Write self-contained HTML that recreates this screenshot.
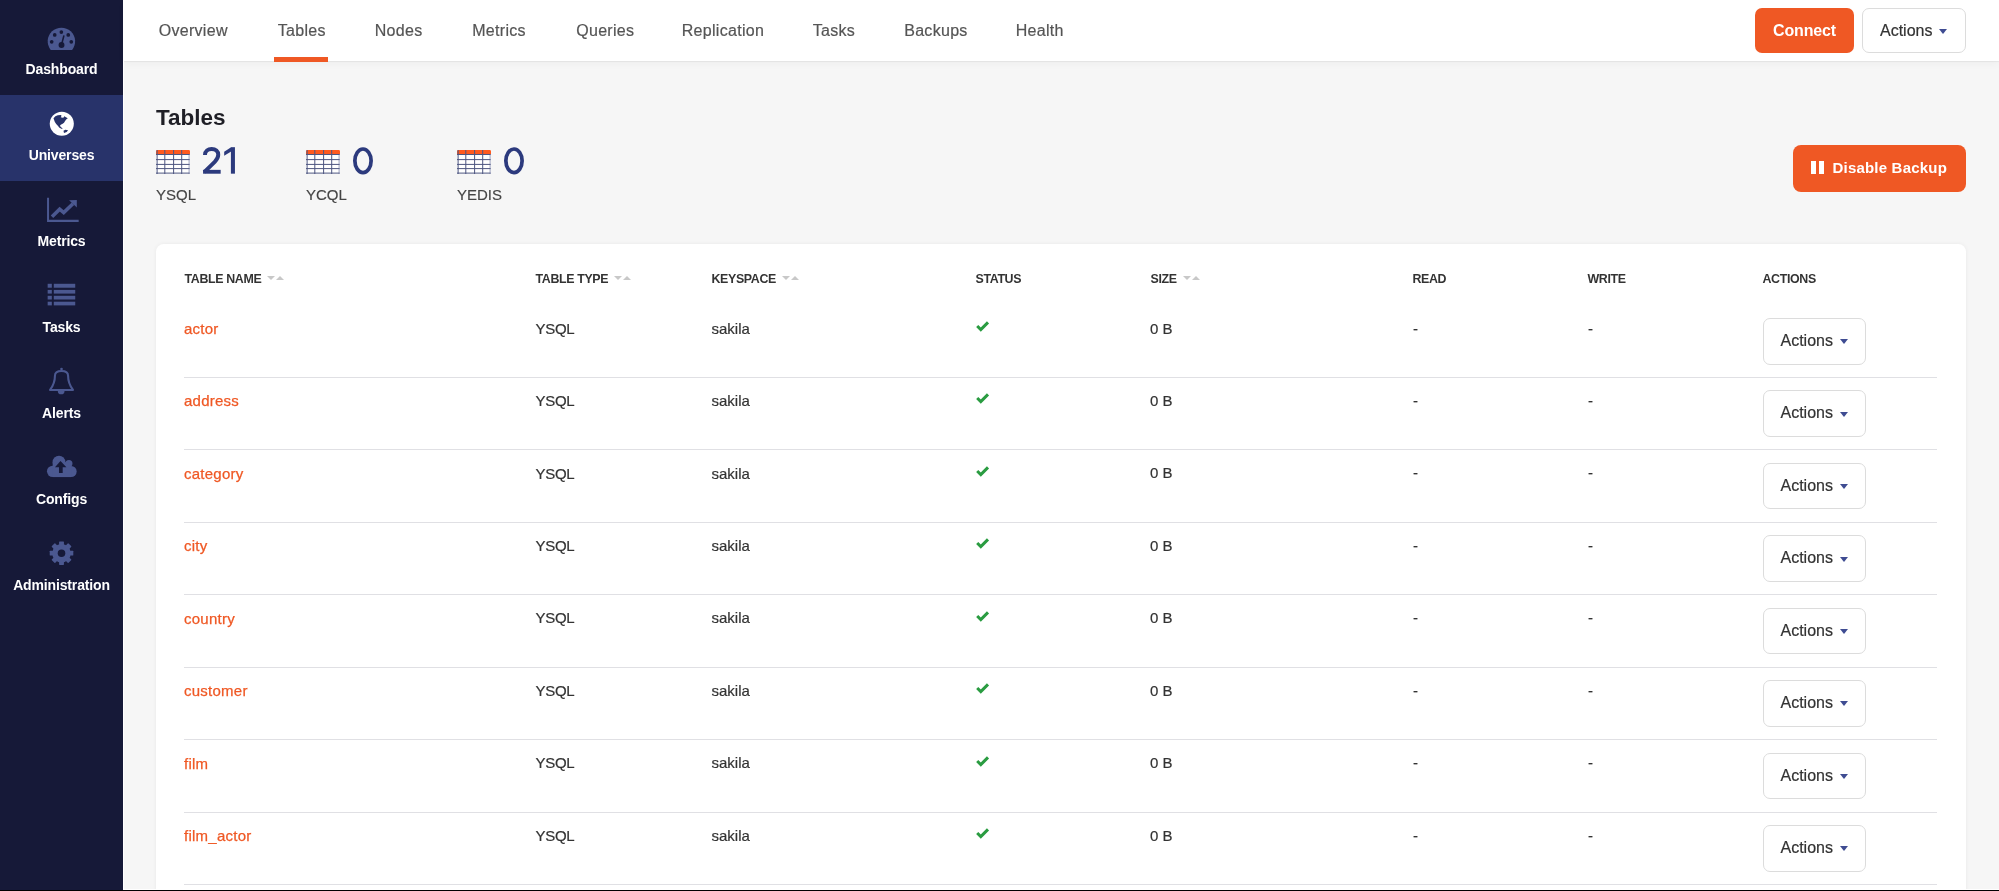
<!DOCTYPE html>
<html><head><meta charset="utf-8"><style>
*{box-sizing:border-box;margin:0;padding:0}
html,body{width:1999px;height:891px;overflow:hidden;background:#f6f6f6;font-family:"Liberation Sans",sans-serif;position:relative}
#side{position:absolute;left:0;top:0;width:123px;height:891px;background:#161938}
#vline{position:absolute;left:123px;top:0;width:1px;height:891px;background:#fff}
#bline{position:absolute;left:123px;top:889px;width:1876px;height:1px;background:#fff}
#black{position:absolute;left:0;top:890px;width:1999px;height:1px;background:#000}
.sn{position:absolute;left:0;width:123px;height:86px}
.snl{position:absolute;left:0;width:123px;top:51.5px;text-align:center;color:#fff;font-weight:bold;font-size:14px;line-height:16px;letter-spacing:-0.15px}
#top{position:absolute;left:124px;top:0;width:1875px;height:61px;background:#fff;box-shadow:0 1px 1px rgba(0,0,0,0.05),0 3px 8px rgba(0,0,0,0.035)}
.tab{position:absolute;top:22px;font-size:16px;line-height:18px;color:#555;white-space:nowrap;letter-spacing:0.3px;-webkit-text-stroke:0.2px #555}
#uline{position:absolute;left:150px;top:56.5px;width:54px;height:5px;background:#ef5824}
#connect{position:absolute;left:1631px;top:8px;width:99px;height:44.5px;border-radius:7px;background:#ef5824;color:#fff;font-weight:bold;font-size:16px;line-height:45.5px;letter-spacing:-0.15px;text-align:center}
.abtn{position:absolute;background:#fff;border:1px solid #dcdcdc;border-radius:7px;font-size:16px;color:#333;padding-left:17px;white-space:nowrap;-webkit-text-stroke:0.2px #333}
#tactions{left:1738px;top:8px;width:103.5px;height:44.5px;line-height:43px}
.caret{display:inline-block;width:0;height:0;border-left:4.5px solid transparent;border-right:4.5px solid transparent;border-top:5px solid #3f4c92;margin-left:7px;vertical-align:middle;position:relative;top:0px}
#h1{position:absolute;left:156px;top:104px;font-size:22.5px;font-weight:bold;color:#1f1f26;line-height:27px}
.num{position:absolute;top:142px;font-size:36px;color:#2c3a7d;line-height:40px;-webkit-text-stroke:0.7px #2c3a7d;letter-spacing:-1.5px}
.slabel{position:absolute;top:186px;font-size:15px;color:#444;line-height:17px;-webkit-text-stroke:0.15px #444}
#disable{position:absolute;left:1792.5px;top:145px;width:173px;height:46.5px;border-radius:8px;background:#ef5824;color:#fff;font-weight:bold;font-size:15px;line-height:46.5px;padding-left:40px;letter-spacing:0.2px}
.pause{position:absolute;left:18px;top:16px;width:5px;height:12.5px;background:#fff}
#disable .p2{left:26px}
#card{position:absolute;left:156px;top:244px;width:1810px;height:700px;background:#fff;border-radius:8px;box-shadow:0 0 4px rgba(0,0,0,0.06)}
.th{position:absolute;top:272px;font-size:12.4px;font-weight:bold;color:#333;line-height:14px;white-space:nowrap;letter-spacing:-0.35px}
.sort{display:inline-block;position:relative;width:18px;height:6px;margin-left:6px;top:-1px}
.sort i{position:absolute;top:0;width:0;height:0;border-left:4px solid transparent;border-right:4px solid transparent}
.sort .dn{left:0;border-left-width:4.3px;border-right-width:4.3px;border-top:4.7px solid #c8c8c8}
.sort .up{left:9px;border-left-width:4.3px;border-right-width:4.3px;border-bottom:4.7px solid #c8c8c8}
.td{position:absolute;font-size:15px;color:#333;line-height:20px;white-space:nowrap;-webkit-text-stroke:0.2px #333}
.link{color:#ef5824;letter-spacing:0.25px;-webkit-text-stroke:0.25px #ef5824}
.chk{position:absolute}
.rowbtn{left:1762.5px;width:103.5px;height:46.5px;line-height:43px;margin-top:0}
.sep{position:absolute;left:184px;width:1753px;height:1px;background:#e0e0e4}
</style></head>
<body>
<div id="wrap" style="position:absolute;left:0;top:0;width:1999px;height:891px;will-change:transform">
<div id="side"></div>
<div class="sn" style="top:9px;"><svg width="36" height="30" viewBox="0 0 1069 891" style="position:absolute;left:44px;top:15px;overflow:visible"><path d="M200 770 A407 407 0 1 1 834 770 Z" fill="#4b5890"/><g fill="#161938"><circle cx="515" cy="240" r="55"/><circle cx="318" cy="325" r="55"/><circle cx="720" cy="325" r="55"/><circle cx="228" cy="530" r="55"/><circle cx="810" cy="530" r="55"/><circle cx="520" cy="625" r="88"/></g><path d="M520 620 L588 355" stroke="#161938" stroke-width="46" stroke-linecap="round"/></svg><div class="snl">Dashboard</div></div>
<div class="sn" style="top:95px;background:#28336a;"><svg width="24" height="24" viewBox="0 0 891 891" style="position:absolute;left:50px;top:17px;overflow:visible"><circle cx="438" cy="434" r="447" fill="#fff"/><path d="M130 235 L200 160 L290 120 L400 110 L430 140 L400 195 L470 215 L520 195 L520 160 L560 175 L660 235 L600 280 L560 330 L520 400 L470 440 L400 470 L370 510 L400 560 L460 600 L470 620 L420 620 L340 580 L300 520 L230 450 L180 370 L150 290 Z M500 700 L570 660 L670 680 L620 740 L520 780 Z" fill="#28336a"/></svg><div class="snl">Universes</div></div>
<div class="sn" style="top:181px;"><svg width="36" height="30" viewBox="0 0 1069 891" style="position:absolute;left:44px;top:13px;overflow:visible"><path d="M90 110 H150 V765 H1030 V830 H90 Z" fill="#4b5890"/><path d="M237 677 L465 450 L585 550 L860 290" fill="none" stroke="#4b5890" stroke-width="106" stroke-linejoin="miter"/><path d="M745 185 L975 180 L975 400 Z" fill="#4b5890"/></svg><div class="snl">Metrics</div></div>
<div class="sn" style="top:267px;"><svg width="85" height="70" viewBox="0 0 1082 891" style="position:absolute;left:20px;top:5px;overflow:visible"><g fill="#4b5890"><rect x="352" y="150" width="53" height="50"/><rect x="430" y="150" width="273" height="50"/><rect x="352" y="228" width="53" height="47"/><rect x="430" y="228" width="273" height="47"/><rect x="352" y="303" width="53" height="47"/><rect x="430" y="303" width="273" height="47"/><rect x="352" y="378" width="53" height="47"/><rect x="430" y="378" width="273" height="47"/></g></svg><div class="snl">Tasks</div></div>
<div class="sn" style="top:353px;"><svg width="36" height="30" viewBox="0 0 1069 891" style="position:absolute;left:44px;top:11px;overflow:visible"><path d="M180 770 H860 M180 770 C270 650 325 540 325 350 C325 255 410 210 520 210 C630 210 715 255 715 350 C715 540 770 650 860 770" fill="none" stroke="#4b5890" stroke-width="62" stroke-linejoin="round" stroke-linecap="round"/><circle cx="520" cy="148" r="40" fill="#4b5890"/><path d="M410 800 A100 100 0 0 0 610 800 Z" fill="#4b5890"/></svg><div class="snl">Alerts</div></div>
<div class="sn" style="top:439px;"><svg width="36" height="30" viewBox="0 0 1069 891" style="position:absolute;left:44px;top:13px;overflow:visible"><g fill="#4b5890"><circle cx="258" cy="575" r="170"/><circle cx="445" cy="300" r="190"/><circle cx="740" cy="345" r="105"/><circle cx="805" cy="580" r="165"/><rect x="258" y="300" width="547" height="445"/></g><path d="M490 268 L665 450 H555 V625 H445 V450 H325 Z" fill="#161938"/></svg><div class="snl">Configs</div></div>
<div class="sn" style="top:525px;"><svg width="36" height="30" viewBox="0 0 1069 891" style="position:absolute;left:44px;top:11px;overflow:visible"><g fill="#4b5890" transform="translate(520 510)"><circle r="275"/><rect x="-72" y="-350" width="144" height="160" rx="18" transform="rotate(0)"/><rect x="-72" y="-350" width="144" height="160" rx="18" transform="rotate(45)"/><rect x="-72" y="-350" width="144" height="160" rx="18" transform="rotate(90)"/><rect x="-72" y="-350" width="144" height="160" rx="18" transform="rotate(135)"/><rect x="-72" y="-350" width="144" height="160" rx="18" transform="rotate(180)"/><rect x="-72" y="-350" width="144" height="160" rx="18" transform="rotate(225)"/><rect x="-72" y="-350" width="144" height="160" rx="18" transform="rotate(270)"/><rect x="-72" y="-350" width="144" height="160" rx="18" transform="rotate(315)"/></g><circle cx="520" cy="510" r="112" fill="#161938"/></svg><div class="snl">Administration</div></div>
<div id="top">
<div class="tab" style="left:34.7px">Overview</div>
<div class="tab" style="left:153.7px">Tables</div>
<div class="tab" style="left:250.7px">Nodes</div>
<div class="tab" style="left:348.2px">Metrics</div>
<div class="tab" style="left:452.2px">Queries</div>
<div class="tab" style="left:557.7px">Replication</div>
<div class="tab" style="left:688.7px">Tasks</div>
<div class="tab" style="left:780.2px">Backups</div>
<div class="tab" style="left:891.7px">Health</div>
<div id="uline"></div>
<div id="connect">Connect</div>
<div id="tactions" class="abtn">Actions<span class="caret"></span></div>
</div>
<div id="h1">Tables</div>
<svg width="34" height="24" viewBox="0 0 340 240" style="position:absolute;left:156px;top:150px"><rect x="0" y="0" width="340" height="240" fill="#fff"/><rect x="0" y="0" width="340" height="44" rx="12" fill="#ff5a1f"/><rect x="0" y="20" width="340" height="24" fill="#ff5a1f"/><rect x="6" y="0" width="10" height="240" fill="#4d5580"/><rect x="83" y="0" width="10" height="240" fill="#4d5580"/><rect x="171" y="0" width="10" height="240" fill="#4d5580"/><rect x="252" y="0" width="10" height="240" fill="#4d5580"/><rect x="326" y="40" width="10" height="200" fill="#9ca1bd"/><rect x="0" y="40" width="336" height="10" fill="#4d5580"/><rect x="0" y="91" width="336" height="10" fill="#4d5580"/><rect x="0" y="139" width="336" height="10" fill="#4d5580"/><rect x="0" y="181" width="336" height="10" fill="#4d5580"/><rect x="0" y="226" width="336" height="10" fill="#4d5580"/></svg>
<svg width="50" height="40" viewBox="0 0 1114 891" style="position:absolute;left:195px;top:140px"><g fill="none" stroke="#2c3a7d" stroke-width="88"><path d="M222 335 C222 240 290 200 370 200 C460 200 518 250 518 330 C518 400 485 440 440 485 L205 715"/></g><g fill="#2c3a7d"><rect x="180" y="665" width="392" height="86"/><rect x="800" y="160" width="90" height="590"/><path d="M650 262 L805 160 L805 258 L650 352 Z"/></g></svg>
<div class="slabel" style="left:156px">YSQL</div>
<svg width="34" height="24" viewBox="0 0 340 240" style="position:absolute;left:306px;top:150px"><rect x="0" y="0" width="340" height="240" fill="#fff"/><rect x="0" y="0" width="340" height="44" rx="12" fill="#ff5a1f"/><rect x="0" y="20" width="340" height="24" fill="#ff5a1f"/><rect x="6" y="0" width="10" height="240" fill="#4d5580"/><rect x="83" y="0" width="10" height="240" fill="#4d5580"/><rect x="171" y="0" width="10" height="240" fill="#4d5580"/><rect x="252" y="0" width="10" height="240" fill="#4d5580"/><rect x="326" y="40" width="10" height="200" fill="#9ca1bd"/><rect x="0" y="40" width="336" height="10" fill="#4d5580"/><rect x="0" y="91" width="336" height="10" fill="#4d5580"/><rect x="0" y="139" width="336" height="10" fill="#4d5580"/><rect x="0" y="181" width="336" height="10" fill="#4d5580"/><rect x="0" y="226" width="336" height="10" fill="#4d5580"/></svg>
<svg width="35" height="35" viewBox="0 0 891 891" style="position:absolute;left:345px;top:145px"><ellipse cx="458" cy="402" rx="207" ry="300" fill="none" stroke="#2c3a7d" stroke-width="95"/></svg>
<div class="slabel" style="left:306px">YCQL</div>
<svg width="34" height="24" viewBox="0 0 340 240" style="position:absolute;left:457px;top:150px"><rect x="0" y="0" width="340" height="240" fill="#fff"/><rect x="0" y="0" width="340" height="44" rx="12" fill="#ff5a1f"/><rect x="0" y="20" width="340" height="24" fill="#ff5a1f"/><rect x="6" y="0" width="10" height="240" fill="#4d5580"/><rect x="83" y="0" width="10" height="240" fill="#4d5580"/><rect x="171" y="0" width="10" height="240" fill="#4d5580"/><rect x="252" y="0" width="10" height="240" fill="#4d5580"/><rect x="326" y="40" width="10" height="200" fill="#9ca1bd"/><rect x="0" y="40" width="336" height="10" fill="#4d5580"/><rect x="0" y="91" width="336" height="10" fill="#4d5580"/><rect x="0" y="139" width="336" height="10" fill="#4d5580"/><rect x="0" y="181" width="336" height="10" fill="#4d5580"/><rect x="0" y="226" width="336" height="10" fill="#4d5580"/></svg>
<svg width="35" height="35" viewBox="0 0 891 891" style="position:absolute;left:495.5px;top:145px"><ellipse cx="458" cy="402" rx="207" ry="300" fill="none" stroke="#2c3a7d" stroke-width="95"/></svg>
<div class="slabel" style="left:457px">YEDIS</div>
<div id="disable"><span class="pause"></span><span class="pause p2"></span>Disable Backup</div>
<div id="card"></div>
<div class="th" style="left:184.5px">TABLE NAME<span class="sort"><i class="dn"></i><i class="up"></i></span></div>
<div class="th" style="left:535.5px">TABLE TYPE<span class="sort"><i class="dn"></i><i class="up"></i></span></div>
<div class="th" style="left:711.5px">KEYSPACE<span class="sort"><i class="dn"></i><i class="up"></i></span></div>
<div class="th" style="left:975.5px">STATUS</div>
<div class="th" style="left:1150.5px">SIZE<span class="sort"><i class="dn"></i><i class="up"></i></span></div>
<div class="th" style="left:1412.5px">READ</div>
<div class="th" style="left:1587.5px">WRITE</div>
<div class="th" style="left:1762.5px">ACTIONS</div>
<div class="td link" style="left:184px;top:319.00px">actor</div>
<div class="td" style="left:535.5px;top:318.75px;letter-spacing:-0.3px">YSQL</div>
<div class="td" style="left:711.5px;top:318.75px">sakila</div>
<svg class="chk" width="14" height="11" viewBox="0 0 14 11" style="left:975.5px;top:321.00px"><path d="M1.2 5 L4.8 8.6 L12 1.4" fill="none" stroke="#2a9c41" stroke-width="3"/></svg>
<div class="td" style="left:1150px;top:318.50px">0 B</div>
<div class="td" style="left:1413px;top:318.50px">-</div>
<div class="td" style="left:1588px;top:318.50px">-</div>
<div class="abtn rowbtn" style="top:318.00px">Actions<span class="caret"></span></div>
<div class="sep" style="top:377.00px"></div>
<div class="td link" style="left:184px;top:391.43px">address</div>
<div class="td" style="left:535.5px;top:391.18px;letter-spacing:-0.3px">YSQL</div>
<div class="td" style="left:711.5px;top:391.18px">sakila</div>
<svg class="chk" width="14" height="11" viewBox="0 0 14 11" style="left:975.5px;top:393.43px"><path d="M1.2 5 L4.8 8.6 L12 1.4" fill="none" stroke="#2a9c41" stroke-width="3"/></svg>
<div class="td" style="left:1150px;top:390.93px">0 B</div>
<div class="td" style="left:1413px;top:390.93px">-</div>
<div class="td" style="left:1588px;top:390.93px">-</div>
<div class="abtn rowbtn" style="top:390.43px">Actions<span class="caret"></span></div>
<div class="sep" style="top:449.43px"></div>
<div class="td link" style="left:184px;top:463.86px">category</div>
<div class="td" style="left:535.5px;top:463.61px;letter-spacing:-0.3px">YSQL</div>
<div class="td" style="left:711.5px;top:463.61px">sakila</div>
<svg class="chk" width="14" height="11" viewBox="0 0 14 11" style="left:975.5px;top:465.86px"><path d="M1.2 5 L4.8 8.6 L12 1.4" fill="none" stroke="#2a9c41" stroke-width="3"/></svg>
<div class="td" style="left:1150px;top:463.36px">0 B</div>
<div class="td" style="left:1413px;top:463.36px">-</div>
<div class="td" style="left:1588px;top:463.36px">-</div>
<div class="abtn rowbtn" style="top:462.86px">Actions<span class="caret"></span></div>
<div class="sep" style="top:521.86px"></div>
<div class="td link" style="left:184px;top:536.29px">city</div>
<div class="td" style="left:535.5px;top:536.04px;letter-spacing:-0.3px">YSQL</div>
<div class="td" style="left:711.5px;top:536.04px">sakila</div>
<svg class="chk" width="14" height="11" viewBox="0 0 14 11" style="left:975.5px;top:538.29px"><path d="M1.2 5 L4.8 8.6 L12 1.4" fill="none" stroke="#2a9c41" stroke-width="3"/></svg>
<div class="td" style="left:1150px;top:535.79px">0 B</div>
<div class="td" style="left:1413px;top:535.79px">-</div>
<div class="td" style="left:1588px;top:535.79px">-</div>
<div class="abtn rowbtn" style="top:535.29px">Actions<span class="caret"></span></div>
<div class="sep" style="top:594.29px"></div>
<div class="td link" style="left:184px;top:608.72px">country</div>
<div class="td" style="left:535.5px;top:608.47px;letter-spacing:-0.3px">YSQL</div>
<div class="td" style="left:711.5px;top:608.47px">sakila</div>
<svg class="chk" width="14" height="11" viewBox="0 0 14 11" style="left:975.5px;top:610.72px"><path d="M1.2 5 L4.8 8.6 L12 1.4" fill="none" stroke="#2a9c41" stroke-width="3"/></svg>
<div class="td" style="left:1150px;top:608.22px">0 B</div>
<div class="td" style="left:1413px;top:608.22px">-</div>
<div class="td" style="left:1588px;top:608.22px">-</div>
<div class="abtn rowbtn" style="top:607.72px">Actions<span class="caret"></span></div>
<div class="sep" style="top:666.72px"></div>
<div class="td link" style="left:184px;top:681.15px">customer</div>
<div class="td" style="left:535.5px;top:680.90px;letter-spacing:-0.3px">YSQL</div>
<div class="td" style="left:711.5px;top:680.90px">sakila</div>
<svg class="chk" width="14" height="11" viewBox="0 0 14 11" style="left:975.5px;top:683.15px"><path d="M1.2 5 L4.8 8.6 L12 1.4" fill="none" stroke="#2a9c41" stroke-width="3"/></svg>
<div class="td" style="left:1150px;top:680.65px">0 B</div>
<div class="td" style="left:1413px;top:680.65px">-</div>
<div class="td" style="left:1588px;top:680.65px">-</div>
<div class="abtn rowbtn" style="top:680.15px">Actions<span class="caret"></span></div>
<div class="sep" style="top:739.15px"></div>
<div class="td link" style="left:184px;top:753.58px">film</div>
<div class="td" style="left:535.5px;top:753.33px;letter-spacing:-0.3px">YSQL</div>
<div class="td" style="left:711.5px;top:753.33px">sakila</div>
<svg class="chk" width="14" height="11" viewBox="0 0 14 11" style="left:975.5px;top:755.58px"><path d="M1.2 5 L4.8 8.6 L12 1.4" fill="none" stroke="#2a9c41" stroke-width="3"/></svg>
<div class="td" style="left:1150px;top:753.08px">0 B</div>
<div class="td" style="left:1413px;top:753.08px">-</div>
<div class="td" style="left:1588px;top:753.08px">-</div>
<div class="abtn rowbtn" style="top:752.58px">Actions<span class="caret"></span></div>
<div class="sep" style="top:811.58px"></div>
<div class="td link" style="left:184px;top:826.01px">film_actor</div>
<div class="td" style="left:535.5px;top:825.76px;letter-spacing:-0.3px">YSQL</div>
<div class="td" style="left:711.5px;top:825.76px">sakila</div>
<svg class="chk" width="14" height="11" viewBox="0 0 14 11" style="left:975.5px;top:828.01px"><path d="M1.2 5 L4.8 8.6 L12 1.4" fill="none" stroke="#2a9c41" stroke-width="3"/></svg>
<div class="td" style="left:1150px;top:825.51px">0 B</div>
<div class="td" style="left:1413px;top:825.51px">-</div>
<div class="td" style="left:1588px;top:825.51px">-</div>
<div class="abtn rowbtn" style="top:825.01px">Actions<span class="caret"></span></div>
<div class="sep" style="top:884.01px"></div>
<div id="vline"></div><div id="bline"></div><div id="black"></div>
</div>
</body></html>
